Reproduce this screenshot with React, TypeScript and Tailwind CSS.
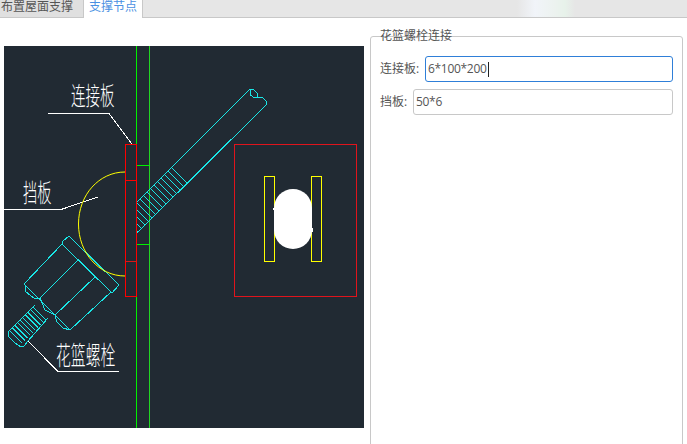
import React from 'react';

const rodHatch = Array.from({ length: 15 }, (_, i) => 4 - i * 7);
const threadHatch = Array.from({ length: 10 }, (_, i) => -274 - i * 5.2);

const CadText = ({ x, y, size, sx, children }: { x: number; y: number; size: number; sx: number; children: string }) => (
  <text transform={`translate(${x} ${y}) scale(${sx} 1)`} fontSize={size} fill="#ffffff" fontWeight={300}>
    {children}
  </text>
);

const Drawing = () => (
  <svg viewBox="4 46 360 382" className="block h-[382px] w-[360px] bg-[#212a33]">
    <g fill="none" strokeWidth="1" shapeRendering="crispEdges">
      {/* 柱子 */}
      <path d="M136.5 46V428" stroke="#00f000" />
      <path d="M149.5 46V428" stroke="#22d622" />
      <path d="M137 165.5H149M137 244.5H149" stroke="#00f000" />

      {/* 连接板 */}
      <path d="M125.5 144.5H136.5V296.5H125.5ZM125.5 180.5H136.5" stroke="#ff0000" />
      <path d="M125.5 261.5H136.5" stroke="#d81818" />

      {/* 引线 */}
      <path d="M48 113.5H109L132 144M4 209.5H61L98 197M28 341L58 371.5H119" stroke="#ffffff" />

      {/* 螺杆 */}
      <g stroke="#19e6e6">
        <path d="M137 202L250 89H253L257 93L258 97H262L266 101V105L137 233" />
        <path d="M250.5 90V95L253 97H258" />
        {rodHatch.map(d => {
          const x1 = Math.max(137, (339 + d) / 2);
          return <path key={d} d={`M${x1} ${x1 - d}L${(370 + d) / 2} ${(370 - d) / 2}`} />;
        })}

        {/* 花篮螺栓 */}
        <path d="M69 236L62 242V244L112 293L119 285L69 236Z" />
        <path d="M62 244L24 284L70 330L111 292" />
        <path d="M40 298L78 260M55 315L95 277" />
        <path d="M25 285L26 292L34 298L40 298L45 310L55 315L57 322L63 328L70 330" />
        <path d="M35 305L8 332V336L15 343L21 347L24 346L28 341L48 318" />
        {threadHatch.map(d => (
          <path key={d} d={`M${(340 + d) / 2} ${(340 - d) / 2}L${(366 + d) / 2} ${(366 - d) / 2}`} />
        ))}
      </g>

      {/* 右侧剖面 */}
      <rect x="234.5" y="144.5" width="122" height="152" stroke="#e0141c" />
      <rect x="264.5" y="176.5" width="10" height="85" stroke="#ffff00" />
      <rect x="311.5" y="176.5" width="10" height="85" stroke="#ffff00" />
    </g>

    <path d="M125 172C99 172 78.5 195 78.5 224C78.5 253 99 276 125 276" fill="none" stroke="#ffff00" strokeWidth="1" />
    <rect x="274" y="189" width="38" height="60" rx="19" ry="19" fill="#ffffff" />
    <path d="M273 208H275V210H273ZM311 228H313V232H311Z" fill="#ffffff" shapeRendering="crispEdges" />

    <CadText x={71} y={105} size={25} sx={0.58}>连接板</CadText>
    <CadText x={23} y={202} size={25} sx={0.57}>挡板</CadText>
    <CadText x={56} y={365} size={26} sx={0.57}>花篮螺栓</CadText>
  </svg>
);

export default function App() {
  return (
    <div className="h-[444px] w-[687px] overflow-hidden bg-white font-['Open_Sans','Noto_Sans_CJK_SC',sans-serif] text-xs text-[#555555]">
      <div className="flex h-[18px] border-b border-[#c8c8c8] bg-[#e6e6e6] leading-[14px]">
        <div className="w-[84px] border-r border-[#c8c8c8] bg-[#e0e0e0] pl-px text-[#555555]">布置屋面支撑</div>
        <div className="-mb-px w-[59px] border-r border-[#c8c8c8] bg-white pl-[5px] text-[#4a90e2]">支撑节点</div>
        <div className="flex-1 bg-[linear-gradient(90deg,#e6e6e6_0px,#e6e6e6_374px,#f1f4f9_392px,#ecf2ef_412px,#e7f2ea_422px,#e6e6e6_432px)]" />
      </div>

      <div className="flex">
        <div className="w-[370px] shrink-0 pl-1 pt-7">
          <Drawing />
        </div>

        <div className="relative mt-[18px] flex h-[440px] w-[313px] flex-col gap-[7px] rounded-t-[3px] border border-[#c8c8c8] px-[9px] pt-[19px]">
          <div className="absolute -top-[8px] left-[9px] leading-[14px] text-[#555555]">花篮螺栓连接</div>
          <div className="flex items-center">
            <span className="w-[45px] shrink-0">连接板:</span>
            <div className="flex h-[26px] flex-1 items-center rounded-[3px] border border-[#2f7fd8] pl-[2px] tracking-[-0.3px]">
              6*100*200
              <span className="ml-px h-[15px] w-px bg-[#222222]" />
            </div>
          </div>
          <div className="flex items-center">
            <span className="w-[33px] shrink-0">挡板:</span>
            <div className="flex h-[26px] flex-1 items-center rounded-[3px] border border-[#c8c8c8] pl-[2px] tracking-[-0.3px]">50*6</div>
          </div>
        </div>
      </div>
    </div>
  );
}
